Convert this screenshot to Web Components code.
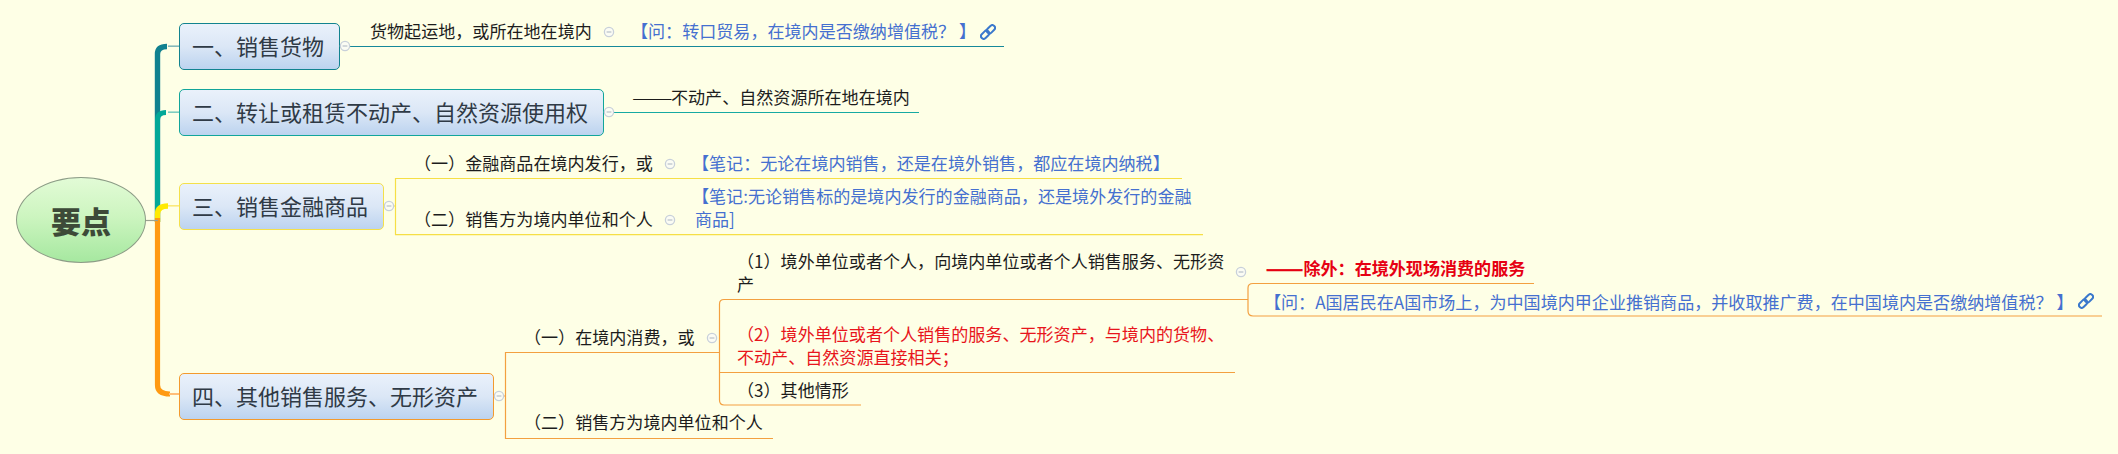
<!DOCTYPE html>
<html lang="zh"><head><meta charset="utf-8"><title>要点</title>
<style>
html,body{margin:0;padding:0;background:#feffe6}
body{font-family:"Noto Sans CJK SC","Noto Sans",sans-serif;color:#222}
</style></head><body>
<mind-map>
  <mind-links></mind-links>
  <mind-root x="16" y="177">要点</mind-root>

  <mind-topic x="178.5" y="23" color="#12838f">一、销售货物</mind-topic>
  <mind-topic x="178.5" y="89" color="#12a59b">二、转让或租赁不动产、自然资源使用权</mind-topic>
  <mind-topic x="178.5" y="183" color="#f4e04a">三、销售金融商品</mind-topic>
  <mind-topic x="178.5" y="373" color="#f39a2e">四、其他销售服务、无形资产</mind-topic>

  <mind-toggle x="345" y="46"></mind-toggle>
  <mind-toggle x="609" y="112"></mind-toggle>
  <mind-toggle x="389" y="206"></mind-toggle>
  <mind-toggle x="499" y="396"></mind-toggle>
  <mind-toggle x="609" y="32"></mind-toggle>
  <mind-toggle x="670" y="164"></mind-toggle>
  <mind-toggle x="670" y="220"></mind-toggle>
  <mind-toggle x="712" y="338"></mind-toggle>
  <mind-toggle x="1241" y="272"></mind-toggle>

  <mind-text x="370" y="32">货物起运地，或所在地在境内</mind-text>
  <mind-text x="631" y="32" kind="note">【问：转口贸易，在境内是否缴纳增值税？<mind-bracket>】</mind-bracket></mind-text>
  <mind-chain x="979.5" y="24"></mind-chain>

  <mind-text x="635" y="98"><mind-dash>——</mind-dash>不动产、自然资源所在地在境内</mind-text>

  <mind-text x="414" y="164">（一）金融商品在境内发行，或</mind-text>
  <mind-text x="692" y="164" kind="note">【笔记：无论在境内销售，还是在境外销售，都应在境内纳税】</mind-text>
  <mind-text x="414" y="220">（二）销售方为境内单位和个人</mind-text>
  <mind-text x="695" y="197" kind="note"><mind-bracket style="margin-left:-3px">【笔记:无论销售标的是境内发行的金融商品，还是境外发行的金融</mind-bracket><br>商品]</mind-text>

  <mind-text x="524" y="338">（一）在境内消费，或</mind-text>
  <mind-text x="524" y="423">（二）销售方为境内单位和个人</mind-text>

  <mind-text x="737" y="262">（1）境外单位或者个人，向境内单位或者个人销售服务、无形资<br>产</mind-text>
  <mind-text x="737" y="335" kind="alert">（2）境外单位或者个人销售的服务、无形资产，与境内的货物、<br>不动产、自然资源直接相关；</mind-text>
  <mind-text x="737" y="391">（3）其他情形</mind-text>

  <mind-text x="1266" y="269" kind="strong"><mind-dash heavy>——</mind-dash>除外：在境外现场消费的服务</mind-text>
  <mind-text x="1264" y="303" kind="note">【问：A国居民在A国市场上，为中国境内甲企业推销商品，并收取推广费，在中国境内是否缴纳增值税？<mind-bracket>】</mind-bracket></mind-text>
  <mind-chain x="2077.5" y="293"></mind-chain>
</mind-map>

<script>
function place(el){
  el.style.left=el.getAttribute('x')+'px';
  el.style.top=el.getAttribute('y')+'px';
}
class MindMap extends HTMLElement{
  constructor(){super();this.attachShadow({mode:'open'}).innerHTML=
  '<style>:host{display:block;position:relative;width:2118px;height:454px;overflow:hidden;background:#feffe6}</style><slot></slot>';}
}
class MindLinks extends HTMLElement{
  constructor(){super();this.attachShadow({mode:'open'}).innerHTML=`
  <style>:host{display:block;position:absolute;left:0;top:0;width:2118px;height:454px}svg{display:block}</style>
  <svg width="2118" height="454" viewBox="0 0 2118 454" fill="none">
    <path d="M157.5 222V54Q157.5 46.5 167 46.5" stroke="#10818f" stroke-width="5.4"/>
    <path d="M168 46.2H180" stroke="#85b9ba" stroke-width="1.6"/>
    <path d="M157.5 222V120Q157.5 112.5 166 112.5" stroke="#03a898" stroke-width="5"/>
    <path d="M168 112.2H180" stroke="#7fcdc0" stroke-width="1.6"/>
    <path d="M157.5 222V214Q157.5 206 168 206" stroke="#ffea00" stroke-width="5.4"/>
    <path d="M168 205.8H180" stroke="#fbe97a" stroke-width="1.6"/>
    <path d="M157.5 218V385Q157.5 394 170 394" stroke="#ff9a12" stroke-width="5.2"/>
    <path d="M169 394H180" stroke="#ffbe78" stroke-width="2"/>
    <path d="M145 220.5H158" stroke="#9aa090" stroke-width="1.2"/>

    <path d="M338 46H340M350 46.5H1004" stroke="#16899a" stroke-width="1.2"/>
    <path d="M603 112H604M614 112.5H919" stroke="#16aaa2" stroke-width="1.2"/>

    <path d="M383 206H384M394 206H395.5M1182 178.5H395.5V234.7H1203" stroke="#f6df45" stroke-width="1.2"/>

    <path d="M492 396H494M504 396H505.5M719 352.5H505.5V438.5H773" stroke="#f3a040" stroke-width="1.2"/>

    <path d="M1248 299.5H724Q719.5 299.5 719.5 304V400Q719.5 405 724 405H861" stroke="#f3a040" stroke-width="1.2"/>
    <path d="M719.5 372.5H1235" stroke="#f3a040" stroke-width="1.2"/>

    <path d="M1534 283.5H1253Q1248 283.5 1248 288V311Q1248 316 1253 316H2102" stroke="#f3a040" stroke-width="1.2"/>
  </svg>`;}
}
class MindRoot extends HTMLElement{
  constructor(){super();this.attachShadow({mode:'open'}).innerHTML=`
  <style>:host{display:flex;position:absolute;width:130px;height:86px;box-sizing:border-box;align-items:center;justify-content:center;
    border:1px solid #8c9c86;border-radius:50%;background:linear-gradient(180deg,#e2fbd6 0%,#cdf5c0 45%,#a6e8a0 100%);
    font:900 30px/1 "Noto Sans CJK SC",sans-serif;color:#3d4a38;padding-bottom:1px}</style><slot></slot>`;}
  connectedCallback(){place(this);}
}
class MindTopic extends HTMLElement{
  constructor(){super();this.attachShadow({mode:'open'}).innerHTML=`
  <style>:host{display:block;position:absolute;box-sizing:border-box;height:47px;padding:0 14.5px 0 12.5px;border:1px solid var(--c);border-radius:5px;
    background:linear-gradient(180deg,#eaf1fb 0%,#dbe7f6 50%,#bcd3ef 100%);
    font:400 22px/43px "Noto Sans CJK SC",sans-serif;color:#2f3a46;white-space:nowrap}</style><slot></slot>`;}
  connectedCallback(){place(this);this.style.setProperty('--c',this.getAttribute('color'));}
}
class MindText extends HTMLElement{
  constructor(){super();this.attachShadow({mode:'open'}).innerHTML=`
  <style>:host{display:block;position:absolute;margin-top:-13.5px;font:400 17.07px/23px "Noto Sans CJK SC",sans-serif;color:#1c1c1c;white-space:nowrap}
  :host([kind=note]){color:#4570d0}
  :host([kind=alert]){color:#e8151c}
  :host([kind=strong]){color:#e60012;font-weight:700}</style><slot></slot>`;}
  connectedCallback(){place(this);}
}
class MindBracket extends HTMLElement{
  constructor(){super();this.attachShadow({mode:'open'}).innerHTML=`
  <style>:host{display:inline}</style><slot></slot>`;}
}
class MindDash extends HTMLElement{
  constructor(){super();this.attachShadow({mode:'open'}).innerHTML=`
  <style>:host{display:inline-block;width:36px;white-space:nowrap;transform:translateX(-3px) scaleX(1.42);transform-origin:0 50%}
  :host([heavy]){width:37.5px;transform:scaleX(1.28);-webkit-text-stroke:.7px currentColor}</style><slot></slot>`;}
}
class MindToggle extends HTMLElement{
  constructor(){super();this.attachShadow({mode:'open'}).innerHTML=`
  <style>:host{display:block;position:absolute;width:12px;height:12px;margin:-6px 0 0 -6px}svg{display:block}</style>
  <svg width="12" height="12" viewBox="0 0 12 12"><circle cx="6" cy="6" r="4.6" fill="#fbfcf4" stroke="#c8d0da" stroke-width="1.3"/><path d="M3.6 6H8.4" stroke="#aab4c0" stroke-width="1"/></svg>`;}
  connectedCallback(){place(this);}
}
class MindChain extends HTMLElement{
  constructor(){super();this.attachShadow({mode:'open'}).innerHTML=`
  <style>:host{display:block;position:absolute;width:16px;height:16px}svg{display:block}</style>
  <svg width="16" height="16" viewBox="0 0 16 16" fill="none" stroke="#3a78cc" stroke-width="2">
    <rect x="6.2" y="2.6" width="9.4" height="5.4" rx="2.7" transform="rotate(-45 10.9 5.3)"/>
    <rect x="0.4" y="8" width="9.4" height="5.4" rx="2.7" transform="rotate(-45 5.1 10.7)"/>
  </svg>`;}
  connectedCallback(){place(this);}
}
customElements.define('mind-map',MindMap);
customElements.define('mind-links',MindLinks);
customElements.define('mind-root',MindRoot);
customElements.define('mind-topic',MindTopic);
customElements.define('mind-text',MindText);
customElements.define('mind-bracket',MindBracket);
customElements.define('mind-dash',MindDash);
customElements.define('mind-toggle',MindToggle);
customElements.define('mind-chain',MindChain);
</script>
</body></html>
